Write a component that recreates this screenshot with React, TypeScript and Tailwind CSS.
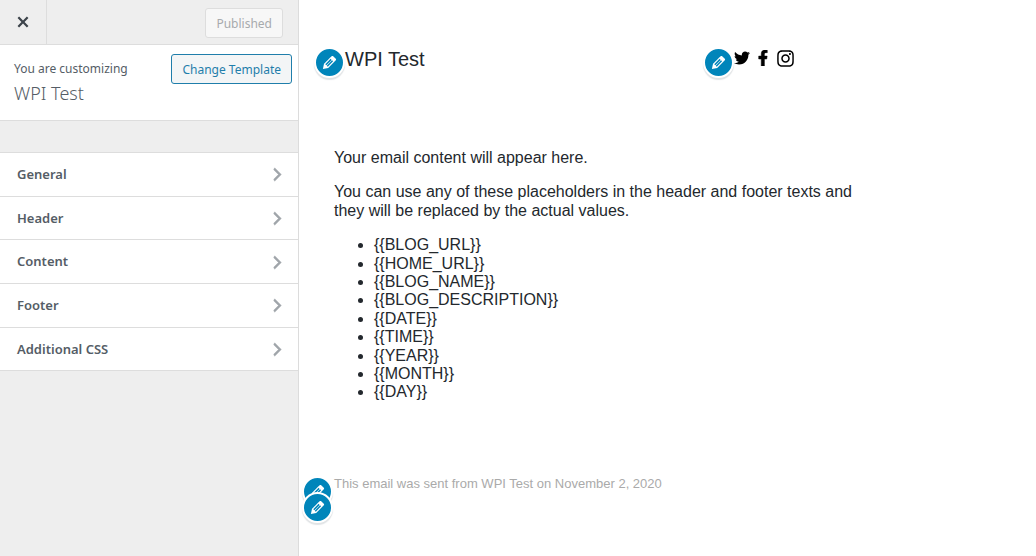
import { FaFacebookF, FaInstagram, FaTwitter } from "react-icons/fa";

const sections = ["General", "Header", "Content", "Footer", "Additional CSS"];

const placeholders = [
  "BLOG_URL",
  "HOME_URL",
  "BLOG_NAME",
  "BLOG_DESCRIPTION",
  "DATE",
  "TIME",
  "YEAR",
  "MONTH",
  "DAY",
];

function EditButton({ label, className }: { label: string; className: string }) {
  return (
    <button
      type="button"
      aria-label={label}
      className={`absolute flex size-[31px] items-center justify-center rounded-full border-2 border-white bg-[#0085ba] text-white shadow-[0_2px_1px_rgba(46,68,83,0.15)] ${className}`}
    >
      <svg viewBox="0 0 20 20" className="size-[19px]" fill="currentColor" aria-hidden="true">
        <path d="M13.89 3.39l2.71 2.72c.46.46.42 1.24.03 1.64l-8.01 8.02-5.56 1.16 1.16-5.58s7.6-7.63 7.99-8.03c.39-.39 1.22-.39 1.68.07zm-2.73 2.79l-5.59 5.61 1.11 1.11 5.54-5.65zm-2.97 8.23l5.58-5.6-1.07-1.08-5.59 5.6z" />
      </svg>
    </button>
  );
}

function Sidebar() {
  return (
    <aside className="w-[299px] shrink-0 border-r border-[#dcdcdc] bg-[#eeeeee] font-['Noto_Sans',sans-serif] text-[#555d66]">
      <div className="flex h-[45px] items-stretch justify-between border-b border-[#dddddd]">
        <button
          type="button"
          aria-label="Close"
          className="flex w-[47px] items-center justify-center border-r border-[#dddddd] text-[#3c434a]"
        >
          <svg viewBox="0 0 20 20" className="size-[22px]" fill="currentColor" aria-hidden="true">
            <path d="M14.95 6.46L11.41 10l3.54 3.54-1.41 1.41L10 11.42l-3.53 3.53-1.42-1.42L8.58 10 5.05 6.47l1.42-1.42L10 8.58l3.54-3.53z" />
          </svg>
        </button>
        <button
          type="button"
          disabled
          className="mt-2 mr-[15px] h-[30px] rounded-[3px] border border-[#dddddd] bg-[#f7f7f7] px-[10px] pt-[2px] text-[12px] text-[#a7aaad]"
        >
          Published
        </button>
      </div>

      <div className="flex h-[76px] justify-between border-b border-[#dddddd] bg-white pr-[6px] pl-[14px]">
        <div className="pt-[14px]">
          <p className="text-[12px] leading-[20px]">You are customizing</p>
          <h1 className="text-[18px] leading-[28px] font-light">WPI Test</h1>
        </div>
        <button
          type="button"
          className="mt-[9px] h-[30px] rounded-[3px] border border-[#1f7eab] bg-[#f3f5f6] px-[10px] pt-[2px] text-[12px] whitespace-nowrap text-[#1f7eab]"
        >
          Change Template
        </button>
      </div>

      <nav className="mt-[31px] border-t border-[#dddddd]">
        {sections.map((name) => (
          <button
            key={name}
            type="button"
            className="flex w-full items-center justify-between border-b border-[#dddddd] bg-white pt-[12px] pb-[11px] pr-[11px] pl-[17px] text-[13px] leading-[1.51] font-semibold"
          >
            {name}
            <svg
              viewBox="0 0 20 20"
              className="size-[19px] text-[#a0a5aa]"
              fill="currentColor"
              stroke="currentColor"
              strokeWidth="0.5"
              aria-hidden="true"
            >
              <path d="M6 15l5-5-5-5 1-2 7 7-7 7z" />
            </svg>
          </button>
        ))}
      </nav>
    </aside>
  );
}

function Preview() {
  return (
    <main className="min-w-0 flex-1 bg-white pt-[46px] pl-[35px] font-['Liberation_Sans',Arial,sans-serif] text-[#23282d]">
      <div className="max-w-[540px]">
        <header className="flex items-start justify-between pr-[79px] pl-[11px]">
          <div className="relative">
            <EditButton label="Edit site title" className="top-[1px] -left-[31px]" />
            <h2 className="text-[20px] leading-[26px]">WPI Test</h2>
          </div>
          <div className="relative flex h-[24px] items-center gap-[5px] text-black">
            <EditButton label="Edit social links" className="top-[1px] -left-[31px]" />
            <a href="#twitter" aria-label="Twitter">
              <FaTwitter size={16} />
            </a>
            <a href="#facebook" aria-label="Facebook">
              <FaFacebookF size={16} stroke="currentColor" strokeWidth={16} />
            </a>
            <a href="#instagram" aria-label="Instagram">
              <FaInstagram size={19} />
            </a>
          </div>
        </header>

        <section className="mt-[77px] text-[16px] leading-[1.15]">
          <p>Your email content will appear here.</p>
          <p className="mt-4">
            You can use any of these placeholders in the header and footer texts and they will be
            replaced by the actual values.
          </p>
          <ul className="mt-4 list-disc pl-10">
            {placeholders.map((name) => (
              <li key={name}>{`{{${name}}}`}</li>
            ))}
          </ul>
        </section>

        <footer className="relative mt-[74px]">
          <EditButton label="Edit footer text" className="top-0 -left-[32px]" />
          <EditButton label="Edit footer" className="top-[16px] -left-[32px]" />
          <p className="text-[13px] leading-[16px] text-[#aaaaaa]">
            This email was sent from WPI Test on November 2, 2020
          </p>
        </footer>
      </div>
    </main>
  );
}

export default function App() {
  return (
    <div className="flex min-h-screen">
      <Sidebar />
      <Preview />
    </div>
  );
}
